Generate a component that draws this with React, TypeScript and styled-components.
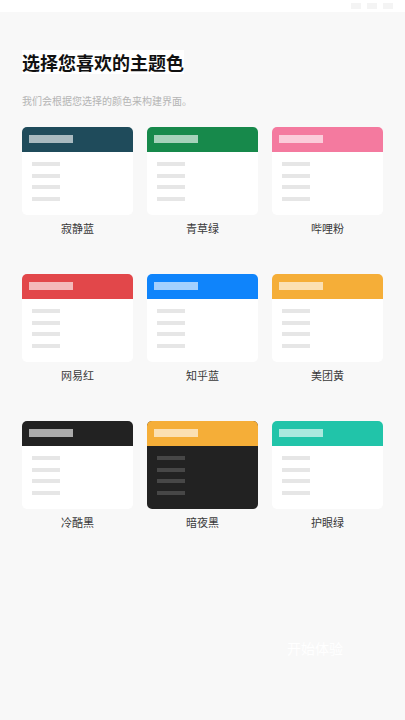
import styled, { createGlobalStyle } from 'styled-components';

interface Theme {
  name: string;
  primary: string;
  dark?: boolean;
}

const themes: Theme[] = [
  { name: '寂静蓝', primary: '#1f4b5b' },
  { name: '青草绿', primary: '#17894b' },
  { name: '哔哩粉', primary: '#f47a9f' },
  { name: '网易红', primary: '#e2474a' },
  { name: '知乎蓝', primary: '#0f84fb' },
  { name: '美团黄', primary: '#f5ae38' },
  { name: '冷酷黑', primary: '#222222' },
  { name: '暗夜黑', primary: '#f5ae38', dark: true },
  { name: '护眼绿', primary: '#21c4a9' },
];

const GlobalStyle = createGlobalStyle`
  html, body {
    margin: 0;
    padding: 0;
    background: #f8f8f8;
  }
  body {
    font-family: "Noto Sans CJK SC", "Noto Sans", sans-serif;
  }
`;

export default function App() {
  return (
    <>
      <GlobalStyle />
      <Page>
        <StatusBar>
          <StatusIcons>
            <span />
            <span />
            <span />
          </StatusIcons>
        </StatusBar>
        <Header>
          <Title>选择您喜欢的主题色</Title>
          <Subtitle>我们会根据您选择的颜色来构建界面。</Subtitle>
        </Header>
        <Grid>
          {themes.map((t) => (
            <Option key={t.name}>
              <Preview $dark={t.dark}>
                <PreviewBar $color={t.primary}>
                  <BarTitle />
                </PreviewBar>
                <PreviewBody>
                  {[0, 1, 2, 3].map((i) => (
                    <Line key={i} $dark={t.dark} />
                  ))}
                </PreviewBody>
              </Preview>
              <Label>{t.name}</Label>
            </Option>
          ))}
        </Grid>
        <Footer>
          <NextButton>开始体验</NextButton>
        </Footer>
      </Page>
    </>
  );
}

const Page = styled.div`
  width: 405px;
  height: 720px;
  display: flex;
  flex-direction: column;
  overflow: hidden;
`;

const StatusBar = styled.div`
  height: 12px;
  background: #ffffff;
  display: flex;
  justify-content: flex-end;
  padding-right: 12px;
`;

const StatusIcons = styled.div`
  display: flex;
  gap: 6px;
  align-items: center;

  span {
    width: 10px;
    height: 6px;
    background: #f4f4f4;
  }
`;

const Header = styled.div`
  padding: 38px 22px 0;
  display: flex;
  flex-direction: column;
  align-items: flex-start;
`;

const Title = styled.h1`
  margin: 0;
  font-size: 18px;
  line-height: 24px;
  font-weight: 700;
  color: #111111;
  background: #ffffff;
`;

const Subtitle = styled.p`
  margin: 20px 0 0;
  font-size: 10px;
  line-height: 14px;
  color: #b4b4b4;
`;

const Grid = styled.div`
  display: grid;
  grid-template-columns: repeat(3, 111px);
  column-gap: 14px;
  row-gap: 38px;
  padding: 19px 22px 0;
`;

const Option = styled.div`
  display: flex;
  flex-direction: column;
  align-items: center;
`;

const Preview = styled.div<{ $dark?: boolean }>`
  width: 111px;
  height: 88px;
  display: flex;
  flex-direction: column;
  border-radius: 5px;
  overflow: hidden;
  background: ${({ $dark }) => ($dark ? '#222222' : '#ffffff')};
`;

const PreviewBar = styled.div<{ $color: string }>`
  height: 25px;
  flex-shrink: 0;
  background: ${({ $color }) => $color};
  padding: 8px 7px 0;
  box-sizing: border-box;
`;

const BarTitle = styled.div`
  width: 44px;
  height: 8px;
  background: rgba(255, 255, 255, 0.62);
`;

const PreviewBody = styled.div`
  display: flex;
  flex-direction: column;
  gap: 7.5px;
  padding: 10px 10px 0;
`;

const Line = styled.div<{ $dark?: boolean }>`
  width: 28px;
  height: 4px;
  background: ${({ $dark }) => ($dark ? '#474747' : '#e6e6e6')};
`;

const Label = styled.div`
  margin-top: 5px;
  font-size: 11px;
  line-height: 16px;
  color: #3a3a3a;
`;

const Footer = styled.div`
  display: flex;
  justify-content: flex-end;
  padding: 108px 50px 0 0;
`;

const NextButton = styled.div`
  font-size: 14px;
  line-height: 20px;
  color: #ffffff;
  padding: 0 12px;
`;
